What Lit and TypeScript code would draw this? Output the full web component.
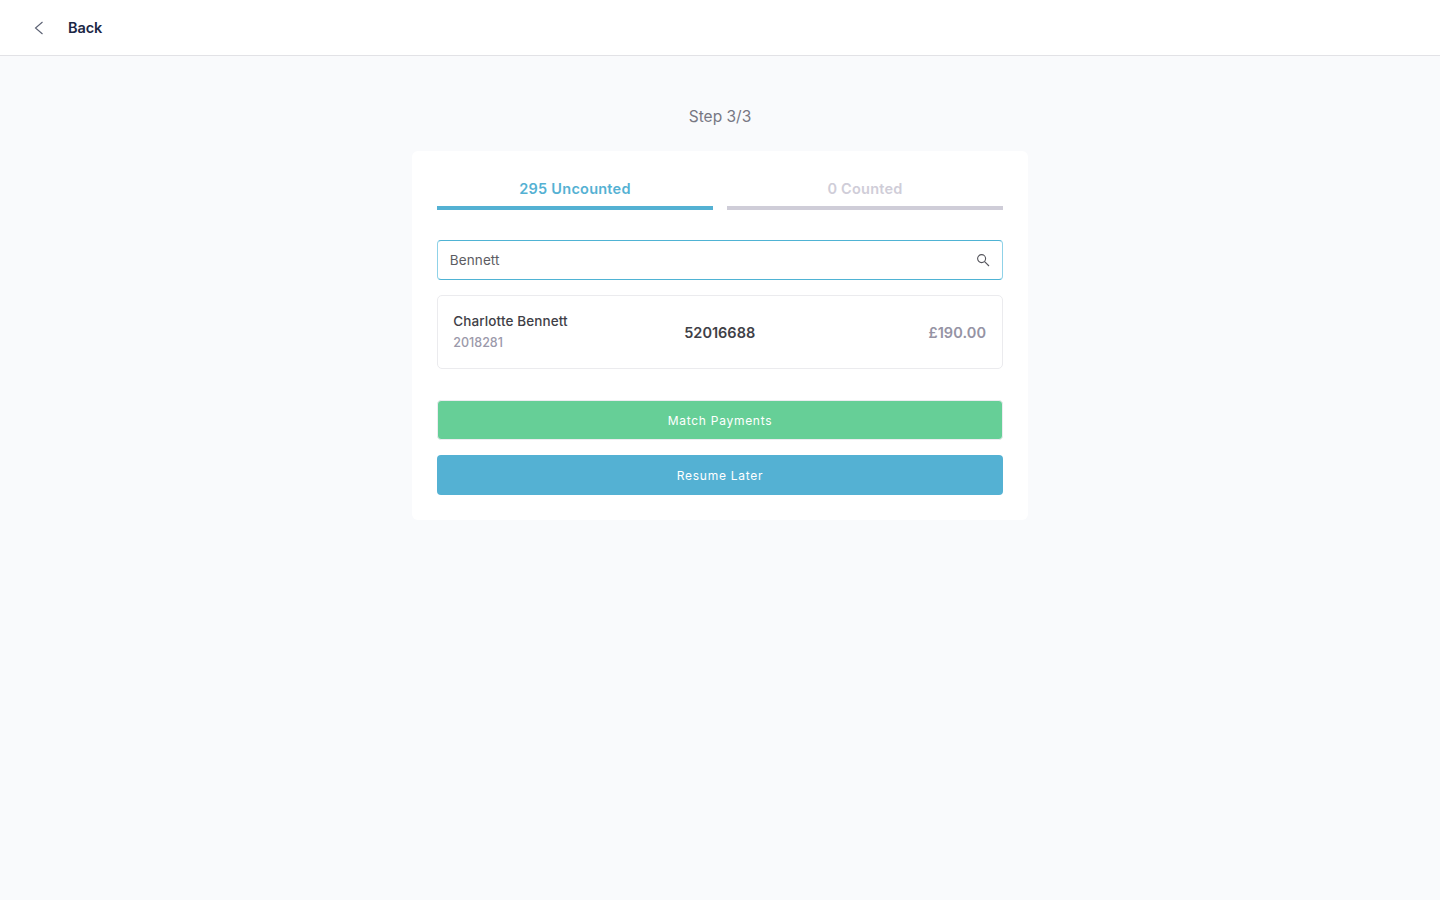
import { LitElement, html, css } from "lit";
import { customElement } from "lit/decorators.js";

@customElement("app-root")
export class AppRoot extends LitElement {
  static styles = css`
    :host {
      display: block;
      min-height: 900px;
      background: #f9fafc;
      font-family: "Inter", "Liberation Sans", sans-serif;
    }
    .header {
      height: 55px;
      background: #fff;
      border-bottom: 1px solid #e2e2e6;
      display: flex;
      align-items: center;
      padding-left: 34px;
      gap: 24px;
    }
    .header svg { display: block; }
    .back { font-size: 14.5px; font-weight: 600; letter-spacing: -0.1px; color: #1c2745; }
    .step {
      padding-top: 51px;
      height: 44px;
      line-height: 20px;
      text-align: center;
      font-size: 15.5px;
      color: #777783;
      box-sizing: content-box;
    }
    .card {
      width: 616px;
      height: 369px;
      box-sizing: border-box;
      margin: 0 auto;
      background: #fff;
      border-radius: 6px;
      padding: 25px 25.33px;
      display: flex;
      flex-direction: column;
    }
    .tabs { display: grid; grid-template-columns: 1fr 1fr; gap: 14.67px; }
    .tab {
      height: 30px;
      text-align: center;
      font-size: 14.5px;
      font-weight: 600;
      letter-spacing: 0.24px;
      line-height: 26px;
      box-sizing: content-box;
      color: #cfcdd8;
      border-bottom: 4px solid #cfcdd8;
    }
    .tab.on { color: #54b1d3; border-bottom-color: #54b1d3; }
    .search {
      margin-top: 30px;
      height: 40px;
      box-sizing: border-box;
      border: 1px solid #4fb3d4;
      border-left-color: #8fd2e8;
      border-right-color: #8fd2e8;
      border-radius: 4px;
      display: flex;
      align-items: center;
      justify-content: space-between;
      padding: 0 12px 0 11.5px;
      font-size: 13.5px;
      letter-spacing: 0.1px;
      color: #5c5c62;
    }
    .result {
      margin-top: 15px;
      height: 74px;
      box-sizing: border-box;
      border: 1px solid #ebebee;
      border-radius: 5px;
      padding: 0 15.5px 0 15px;
      display: grid;
      grid-template-columns: 1fr 1fr 1fr;
      align-items: center;
    }
    .name { font-size: 13.5px; font-weight: 500; letter-spacing: 0.1px; color: #3f3f47; line-height: 20px; margin-top: -1px; }
    .id { font-size: 12.5px; font-weight: 500; color: #9b99aa; line-height: 20px; margin-top: 2px; }
    .num { text-align: center; font-size: 14.5px; font-weight: 600; color: #3f3f47; }
    .amt { text-align: right; font-size: 14.5px; font-weight: 600; letter-spacing: 0.1px; color: #9593a4; }
    .btn {
      display: flex;
      align-items: center;
      justify-content: center;
      height: 40px;
      box-sizing: border-box;
      border-radius: 4px;
      color: #fff;
      font-size: 12px;
      letter-spacing: 0.72px;
    }
    .match { margin-top: 31px; background: #66cf97; border: 1px solid #ececf0; }
    .resume { margin-top: 15px; background: #54b1d3; }
  `;

  render() {
    return html`
      <div class="header">
        <svg width="10" height="14" viewBox="0 0 10 14" fill="none" stroke="#5a6072" stroke-width="1.1">
          <path d="M8.5 1 L1.5 7 L8.5 13" />
        </svg>
        <span class="back">Back</span>
      </div>
      <div class="step">Step 3/3</div>
      <div class="card">
        <div class="tabs">
          <div class="tab on">295 Uncounted</div>
          <div class="tab">0 Counted</div>
        </div>
        <div class="search">
          <span>Bennett</span>
          <svg width="14" height="14" viewBox="0 0 14 14" fill="none" stroke="#55555c" stroke-width="1.1">
            <circle cx="5.6" cy="5.6" r="4" />
            <path d="M8.6 8.6 L13 13" />
          </svg>
        </div>
        <div class="result">
          <div>
            <div class="name">Charlotte Bennett</div>
            <div class="id">2018281</div>
          </div>
          <div class="num">52016688</div>
          <div class="amt">£190.00</div>
        </div>
        <div class="btn match">Match Payments</div>
        <div class="btn resume">Resume Later</div>
      </div>
    `;
  }
}
